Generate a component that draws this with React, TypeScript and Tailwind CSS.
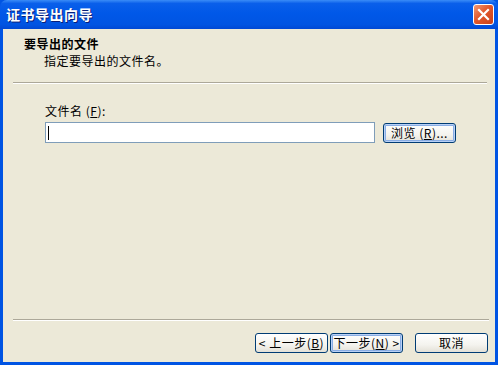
import React from 'react';

const cjk = "font-['SimSun','Noto_Sans_CJK_SC',sans-serif]";

function XpButton({ children, focused = false, className = "" }: { children: React.ReactNode; focused?: boolean; className?: string }) {
  return (
    <button
      className={`h-[20px] w-[73px] rounded-[3px] border border-[#003C74] bg-[linear-gradient(to_bottom,#FFFFFF_0%,#F4F3EE_60%,#E3E1D7_100%)] text-[12px] leading-none tracking-[0.5px] text-black ${focused ? "shadow-[inset_0_0_0_1px_#B9D1F6,inset_0_0_0_2px_#89ADE4]" : ""} ${className}`}
    >
      {children}
    </button>
  );
}

export default function App() {
  return (
    <div className={`flex h-[365px] w-[498px] flex-col overflow-hidden bg-[#0054E3] ${cjk}`}>
      {/* title bar */}
      <div className="flex h-[29px] shrink-0 items-center justify-between rounded-t-[7px] bg-[linear-gradient(to_bottom,#3A8CF7_0%,#0A5FEA_12%,#0058E8_45%,#0054E2_85%,#0048D4_100%)] pl-[6px] pr-[4px]">
        <span className="text-[14px] font-bold tracking-[0.5px] text-white [text-shadow:1px_1px_0_#0A1E78]">
          证书导出向导
        </span>
        <div className="flex h-[21px] w-[21px] items-center justify-center rounded-[3px] border border-white bg-[linear-gradient(135deg,#F29A74_0%,#E2582C_45%,#C8401A_100%)]">
          <svg width="13" height="13" viewBox="0 0 13 13">
            <path d="M2 2 L11 11 M11 2 L2 11" stroke="white" strokeWidth="2.2" strokeLinecap="square" />
          </svg>
        </div>
      </div>

      {/* body */}
      <div className="mx-[3px] mb-[3px] flex flex-1 flex-col bg-[#ECE9D8] text-[12px] text-black">
        {/* header */}
        <div className="flex h-[53px] flex-col pl-[21px] pt-[8px]">
          <span className="font-bold leading-[14px] tracking-[0.5px]">要导出的文件</span>
          <span className="pl-[20px] pt-[3px] leading-[14px] tracking-[0.5px]">指定要导出的文件名。</span>
        </div>
        <div className="ml-[10px] mr-[8px] h-[2px] border-t border-b border-t-[#ACA899] border-b-white" />

        {/* content */}
        <div className="flex flex-1 flex-col pl-[42px] pt-[20px]">
          <span className="leading-[14px] tracking-[0.5px]">
            文件名 (<u>F</u>):
          </span>
          <div className="mt-[4px] flex items-center gap-[8px]">
            <div className="flex h-[21px] w-[330px] items-center border border-[#7F9DB9] bg-white pl-[2px]">
              <span className="h-[14px] w-px bg-black" />
            </div>
            <XpButton focused>
              浏览 (<u>R</u>)...
            </XpButton>
          </div>
        </div>

        {/* footer */}
        <div className="ml-[10px] mr-[6px] h-[2px] border-t border-b border-t-[#ACA899] border-b-white" />
        <div className="flex h-[41px] items-start justify-end pr-[7px] pt-[12px]">
          <XpButton>
            &lt; 上一步(<u>B</u>)
          </XpButton>
          <XpButton focused className="ml-[2px]">
            下一步(<u>N</u>) &gt;
          </XpButton>
          <XpButton className="ml-[12px]">取消</XpButton>
        </div>
      </div>
    </div>
  );
}
